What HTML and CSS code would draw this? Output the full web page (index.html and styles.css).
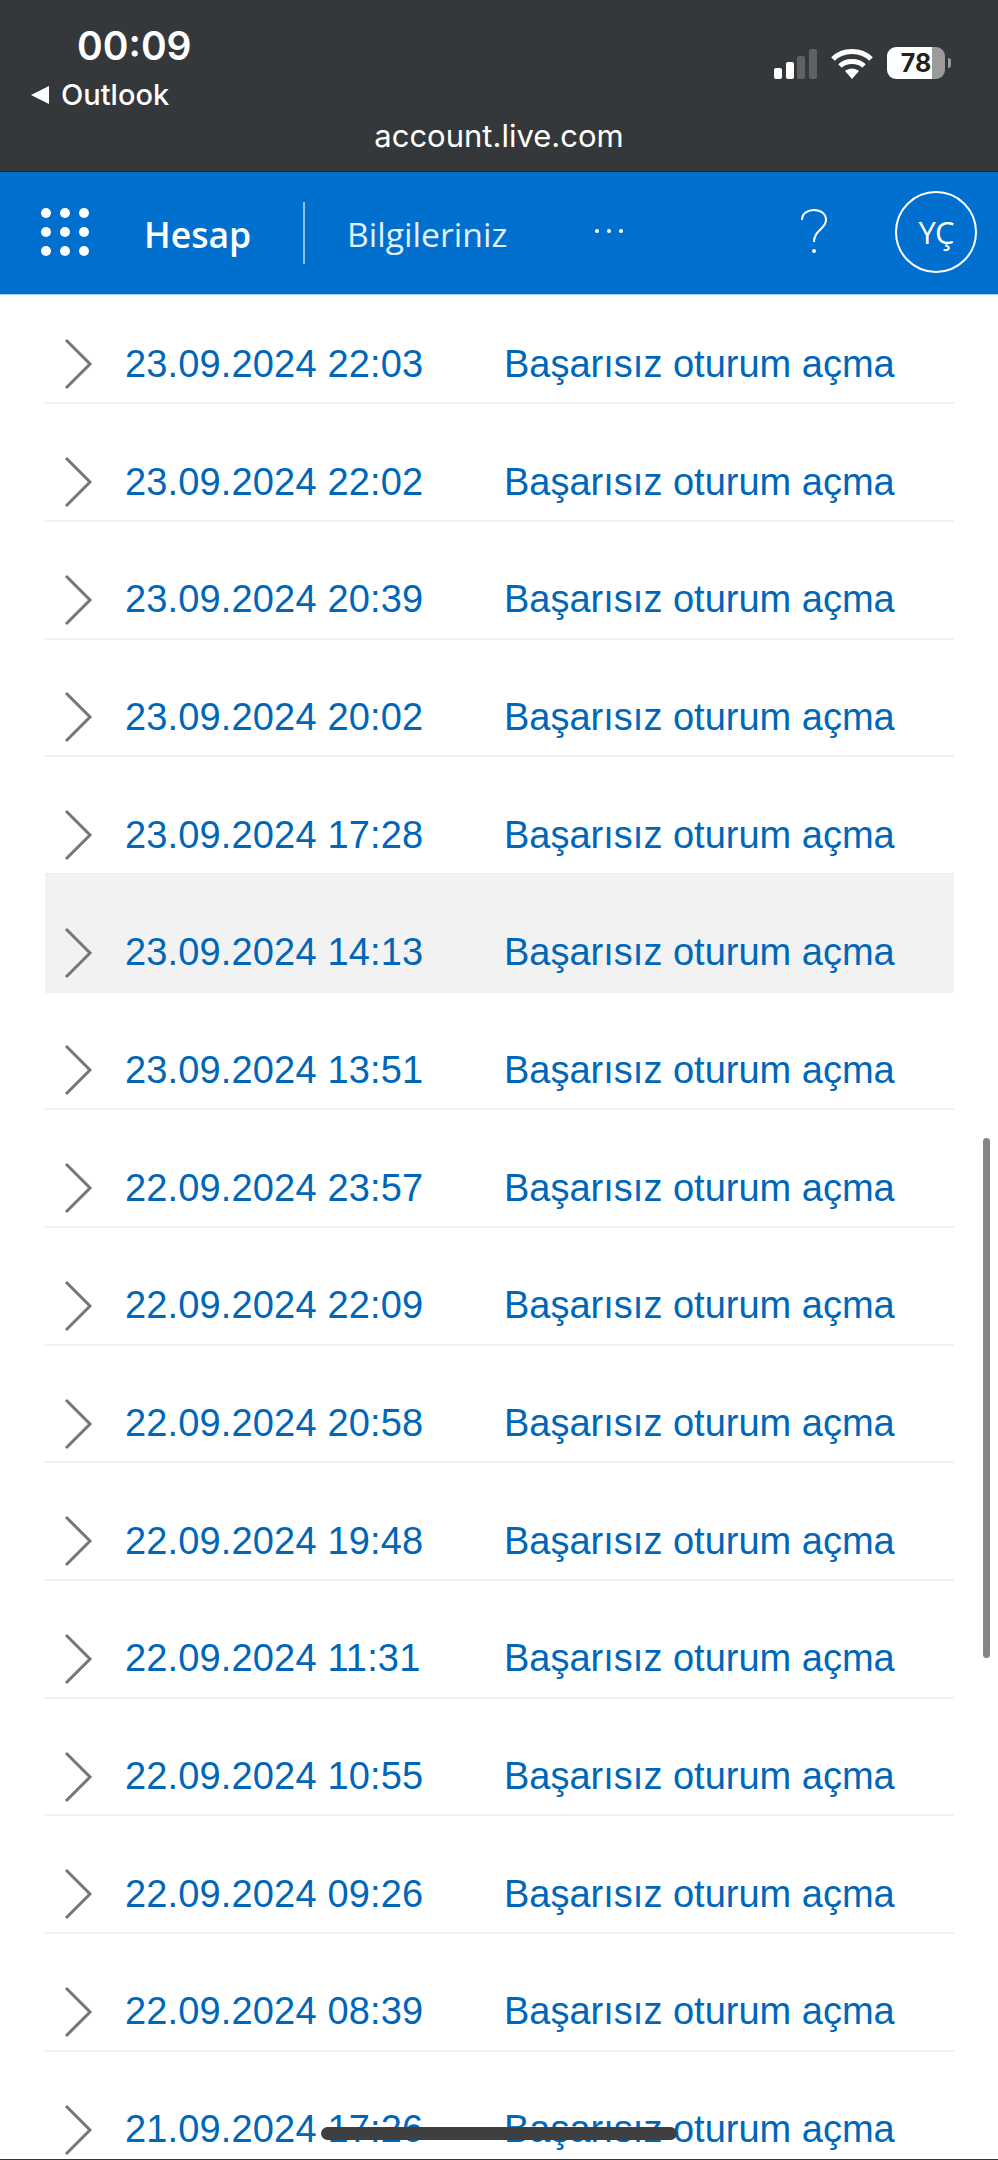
FILE: index.html
```html
<!DOCTYPE html>
<html lang="en">
<head>
    <meta charset="UTF-8">
    <meta name="viewport" content="width=device-width, initial-scale=1.0">
    <title>Hesap</title>
    <link rel="stylesheet" href="styles.css">
</head>
<body>
    <div class="status">
        <div class="status-top">
            <div class="status-left">
                <div class="time">00:09</div>
                <div class="back"><span class="back-arrow"></span>Outlook</div>
            </div>
            <div class="status-icons">
                <svg class="signal" width="44" height="30" viewBox="0 0 44 30">
                    <rect x="0" y="19" width="8" height="11" rx="2" fill="#fff"/>
                    <rect x="12" y="13" width="8" height="17" rx="2" fill="#fff"/>
                    <rect x="23" y="7" width="8" height="23" rx="2" fill="#5f6264"/>
                    <rect x="35" y="0" width="8" height="30" rx="2" fill="#5f6264"/>
                </svg>
                <svg class="wifi" width="42" height="31" viewBox="0 0 42 31">
                    <path d="M2 11 C12 1 30 1 40 11" fill="none" stroke="#fff" stroke-width="5"/>
                    <path d="M9 18 C15 12 27 12 33 18" fill="none" stroke="#fff" stroke-width="5"/>
                    <path d="M14 23 C18 19.5 24 19.5 28 23 L21 31 Z" fill="#fff"/>
                </svg>
                <div class="battery"><span class="battery-num">78</span></div>
                <span class="battery-nub"></span>
            </div>
        </div>
        <div class="url">account.live.com</div>
    </div>

    <header class="topbar">
        <div class="waffle">
            <span></span><span></span><span></span>
            <span></span><span></span><span></span>
            <span></span><span></span><span></span>
        </div>
        <div class="brand">Hesap</div>
        <div class="divider"></div>
        <div class="section">Bilgileriniz</div>
        <div class="more"><span></span><span></span><span></span></div>
        <svg class="help" width="28" height="46" viewBox="0 0 28 46">
            <path d="M2 11 C2 4 8 1 14 1 C21 1 26 5 26 11 C26 20 14 21 14 33" fill="none" stroke="#fff" stroke-width="2"/>
            <circle cx="14" cy="42" r="2" fill="#fff"/>
        </svg>
        <div class="avatar">YÇ</div>
    </header>

    <main class="list-wrap">
        <section class="list">
            <a class="row"><svg class="chev" width="30" height="52" viewBox="0 0 30 52"><path d="M2 2 L26 26 L2 50" fill="none" stroke="#767676" stroke-width="3"/></svg><span class="date">23.09.2024 22:03</span><span class="what">Başarısız oturum açma</span></a>
            <a class="row"><svg class="chev" width="30" height="52" viewBox="0 0 30 52"><path d="M2 2 L26 26 L2 50" fill="none" stroke="#767676" stroke-width="3"/></svg><span class="date">23.09.2024 22:02</span><span class="what">Başarısız oturum açma</span></a>
            <a class="row"><svg class="chev" width="30" height="52" viewBox="0 0 30 52"><path d="M2 2 L26 26 L2 50" fill="none" stroke="#767676" stroke-width="3"/></svg><span class="date">23.09.2024 20:39</span><span class="what">Başarısız oturum açma</span></a>
            <a class="row"><svg class="chev" width="30" height="52" viewBox="0 0 30 52"><path d="M2 2 L26 26 L2 50" fill="none" stroke="#767676" stroke-width="3"/></svg><span class="date">23.09.2024 20:02</span><span class="what">Başarısız oturum açma</span></a>
            <a class="row"><svg class="chev" width="30" height="52" viewBox="0 0 30 52"><path d="M2 2 L26 26 L2 50" fill="none" stroke="#767676" stroke-width="3"/></svg><span class="date">23.09.2024 17:28</span><span class="what">Başarısız oturum açma</span></a>
            <a class="row active"><svg class="chev" width="30" height="52" viewBox="0 0 30 52"><path d="M2 2 L26 26 L2 50" fill="none" stroke="#767676" stroke-width="3"/></svg><span class="date">23.09.2024 14:13</span><span class="what">Başarısız oturum açma</span></a>
            <a class="row"><svg class="chev" width="30" height="52" viewBox="0 0 30 52"><path d="M2 2 L26 26 L2 50" fill="none" stroke="#767676" stroke-width="3"/></svg><span class="date">23.09.2024 13:51</span><span class="what">Başarısız oturum açma</span></a>
            <a class="row"><svg class="chev" width="30" height="52" viewBox="0 0 30 52"><path d="M2 2 L26 26 L2 50" fill="none" stroke="#767676" stroke-width="3"/></svg><span class="date">22.09.2024 23:57</span><span class="what">Başarısız oturum açma</span></a>
            <a class="row"><svg class="chev" width="30" height="52" viewBox="0 0 30 52"><path d="M2 2 L26 26 L2 50" fill="none" stroke="#767676" stroke-width="3"/></svg><span class="date">22.09.2024 22:09</span><span class="what">Başarısız oturum açma</span></a>
            <a class="row"><svg class="chev" width="30" height="52" viewBox="0 0 30 52"><path d="M2 2 L26 26 L2 50" fill="none" stroke="#767676" stroke-width="3"/></svg><span class="date">22.09.2024 20:58</span><span class="what">Başarısız oturum açma</span></a>
            <a class="row"><svg class="chev" width="30" height="52" viewBox="0 0 30 52"><path d="M2 2 L26 26 L2 50" fill="none" stroke="#767676" stroke-width="3"/></svg><span class="date">22.09.2024 19:48</span><span class="what">Başarısız oturum açma</span></a>
            <a class="row"><svg class="chev" width="30" height="52" viewBox="0 0 30 52"><path d="M2 2 L26 26 L2 50" fill="none" stroke="#767676" stroke-width="3"/></svg><span class="date">22.09.2024 11:31</span><span class="what">Başarısız oturum açma</span></a>
            <a class="row"><svg class="chev" width="30" height="52" viewBox="0 0 30 52"><path d="M2 2 L26 26 L2 50" fill="none" stroke="#767676" stroke-width="3"/></svg><span class="date">22.09.2024 10:55</span><span class="what">Başarısız oturum açma</span></a>
            <a class="row"><svg class="chev" width="30" height="52" viewBox="0 0 30 52"><path d="M2 2 L26 26 L2 50" fill="none" stroke="#767676" stroke-width="3"/></svg><span class="date">22.09.2024 09:26</span><span class="what">Başarısız oturum açma</span></a>
            <a class="row"><svg class="chev" width="30" height="52" viewBox="0 0 30 52"><path d="M2 2 L26 26 L2 50" fill="none" stroke="#767676" stroke-width="3"/></svg><span class="date">22.09.2024 08:39</span><span class="what">Başarısız oturum açma</span></a>
            <a class="row"><svg class="chev" width="30" height="52" viewBox="0 0 30 52"><path d="M2 2 L26 26 L2 50" fill="none" stroke="#767676" stroke-width="3"/></svg><span class="date">21.09.2024 17:26</span><span class="what">Başarısız oturum açma</span></a>
        </section>
        <div class="scrollbar"></div>
        <div class="home-bar"></div>
    </main>
</body>
</html>
```

FILE: styles.css
```css
* {
    margin: 0;
    padding: 0;
    box-sizing: border-box;
}

html, body {
    height: 2160px;
    overflow: hidden;
}

body {
    display: flex;
    flex-direction: column;
    background-color: #fff;
    font-family: 'Liberation Sans', Arial, sans-serif;
    border-bottom: 1px solid #35383a;
}

/* phone status + url */
.status {
    height: 172px;
    flex: none;
    background-color: #35383a;
    border-bottom: 1px solid #1f2224;
    color: #fff;
    font-family: 'Inter', sans-serif;
}

.status-top {
    display: flex;
    justify-content: space-between;
    height: 118px;
    padding: 24px 47px 0 31px;
}

.time {
    font-size: 39px;
    font-weight: 600;
    line-height: 44px;
    padding-left: 46px;
}

.back {
    display: flex;
    align-items: center;
    font-size: 29px;
    font-weight: 500;
    line-height: 34px;
    margin-top: 10px;
}

.back-arrow {
    width: 0;
    height: 0;
    border-top: 9px solid transparent;
    border-bottom: 9px solid transparent;
    border-right: 18px solid #fff;
    margin-right: 12px;
}

.status-icons {
    display: flex;
    align-items: flex-start;
    padding-top: 23px;
}

.signal {
    margin-top: 2px;
    margin-right: 13px;
}

.wifi {
    margin-top: 1px;
    margin-right: 14px;
}

.battery {
    width: 58px;
    height: 32px;
    border-radius: 9px;
    background: linear-gradient(to right, #fff 45px, #9b9b9b 45px);
    color: #222;
    text-align: center;
}

.battery-num {
    font-size: 25px;
    font-weight: 700;
    line-height: 32px;
}

.battery-nub {
    width: 3px;
    height: 10px;
    margin-top: 11px;
    margin-left: 3px;
    background-color: #9b9b9b;
    border-radius: 0 3px 3px 0;
}

.url {
    text-align: center;
    font-size: 31px;
    line-height: 36px;
}

/* blue bar */
.topbar {
    display: flex;
    align-items: center;
    flex: none;
    height: 123px;
    background-color: #006fce;
    border-bottom: 1px solid #a9d3f2;
    color: #fff;
    font-family: 'Open Sans', sans-serif;
}

.waffle {
    display: grid;
    grid-template-columns: repeat(3, 10px);
    gap: 9px;
    margin-left: 41px;
    margin-top: -2px;
}

.waffle span {
    width: 10px;
    height: 10px;
    border-radius: 50%;
    background-color: #fff;
}

.brand {
    font-size: 35.5px;
    font-weight: 600;
    margin-left: 55px;
    margin-top: 2px;
    width: 159px;
}

.divider {
    width: 2px;
    height: 62px;
    background-color: #8fc3ec;
}

.section {
    font-size: 33.7px;
    margin-left: 42px;
    margin-top: 2px;
    width: 248px;
    color: #e3f0fb;
}

.more {
    display: flex;
    gap: 8px;
    margin-top: -4px;
}

.more span {
    width: 4px;
    height: 4px;
    border-radius: 50%;
    background-color: #fff;
}

.help {
    margin-left: 177px;
    margin-top: -2px;
}

.avatar {
    width: 82px;
    height: 82px;
    margin-left: 67px;
    margin-top: -3px;
    border: 2px solid #fff;
    border-radius: 50%;
    text-align: center;
    font-size: 31px;
    line-height: 78px;
    letter-spacing: -1px;
}

/* rows */
.list-wrap {
    position: relative;
    flex: 1;
    overflow: hidden;
}

.list {
    margin: -8.5px 44px 0 45px;
}

.row {
    display: flex;
    align-items: center;
    height: 117.7px;
    padding: 40px 0 0 19px;
    border-bottom: 2px solid #f0f0f0;
    color: #0067b8;
    font-size: 38px;
}

.row.active {
    background-color: #f2f2f2;
    border-bottom-color: #f2f2f2;
}

.chev {
    flex: none;
    width: 30px;
}

.date {
    width: 379px;
    margin-left: 31px;
    letter-spacing: 0.15px;
}

.scrollbar {
    position: absolute;
    top: 843px;
    right: 8px;
    width: 7px;
    height: 520px;
    border-radius: 4px;
    background-color: #858585;
}

.home-bar {
    position: absolute;
    left: 321px;
    top: 1832px;
    width: 356px;
    height: 13px;
    border-radius: 7px;
    background-color: #3f3f3f;
}
```
